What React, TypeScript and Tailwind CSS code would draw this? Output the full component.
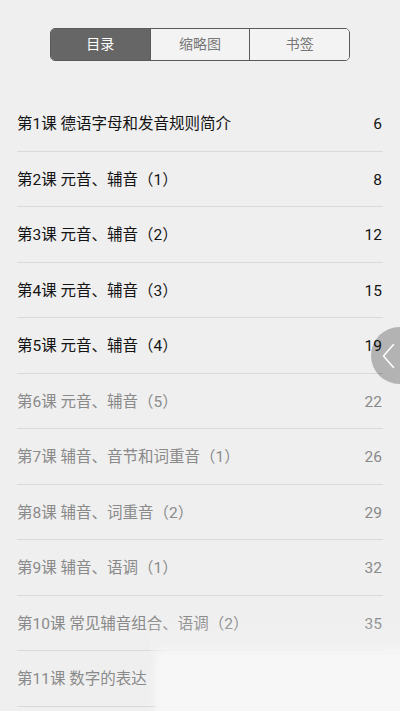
import { useState } from 'react';

type Chapter = { title: string; page?: number; read: boolean };

const chapters: Chapter[] = [
    { title: '第1课 德语字母和发音规则简介', page: 6, read: true },
    { title: '第2课 元音、辅音（1）', page: 8, read: true },
    { title: '第3课 元音、辅音（2）', page: 12, read: true },
    { title: '第4课 元音、辅音（3）', page: 15, read: true },
    { title: '第5课 元音、辅音（4）', page: 19, read: true },
    { title: '第6课 元音、辅音（5）', page: 22, read: false },
    { title: '第7课 辅音、音节和词重音（1）', page: 26, read: false },
    { title: '第8课 辅音、词重音（2）', page: 29, read: false },
    { title: '第9课 辅音、语调（1）', page: 32, read: false },
    { title: '第10课 常见辅音组合、语调（2）', page: 35, read: false },
    { title: '第11课 数字的表达', page: 39, read: false },
];

const tabs = ['目录', '缩略图', '书签'];

const App = () => {
    const [active, setActive] = useState(0);

    return (
        <div
            className="relative h-[711px] w-[400px] overflow-hidden bg-[#efefef]"
            style={{ fontFamily: 'Roboto, "Noto Sans CJK SC", sans-serif' }}
        >
            {/* tab switcher */}
            <div className="flex justify-center pt-[28px]">
                <div className="flex h-[33px] w-[300px] overflow-hidden rounded-[5px] border border-[#5a5a5a]">
                    {tabs.map((t, i) => (
                        <button
                            key={t}
                            onClick={() => setActive(i)}
                            className={`flex flex-1 items-center justify-center text-[14px] ${i > 0 ? 'border-l border-[#5a5a5a]' : ''} ${active === i ? 'bg-[#666666] text-white' : 'bg-[#f3f3f3] text-[#777777]'}`}
                        >
                            {t}
                        </button>
                    ))}
                </div>
            </div>

            {/* chapter list */}
            <div className="mt-[35px] px-[17px]">
                {chapters.map((c) => (
                    <div
                        key={c.title}
                        className={`flex h-[55.5px] items-center justify-between border-b border-[#d9d9d9] pt-[3px] text-[15.5px] ${c.read ? 'text-[#141414]' : 'text-[#8a8a8a]'}`}
                    >
                        <span>{c.title}</span>
                        <span className="pr-[1px]">{c.page}</span>
                    </div>
                ))}
            </div>

            {/* side handle */}
            <div className="absolute left-[371px] top-[327px] flex h-[57px] w-[57px] items-center rounded-full bg-black/25 pl-[11px]">
                <svg width="13" height="26" viewBox="0 0 13 26" fill="none">
                    <path d="M11.5 1.5 L1.5 13 L11.5 24.5" stroke="white" strokeWidth="1.5" strokeLinecap="round" strokeLinejoin="round" />
                </svg>
            </div>

            {/* glare at the bottom right */}
            <div className="absolute left-[155px] top-[649px] h-[120px] w-[300px] rounded-tl-[10px] bg-[#f7f7f7] blur-[3px]" />
            <div className="pointer-events-none absolute left-[150px] top-[615px] h-[40px] w-[260px] bg-gradient-to-b from-transparent to-[#f3f3f3] opacity-50" />
        </div>
    );
};

export default App;
